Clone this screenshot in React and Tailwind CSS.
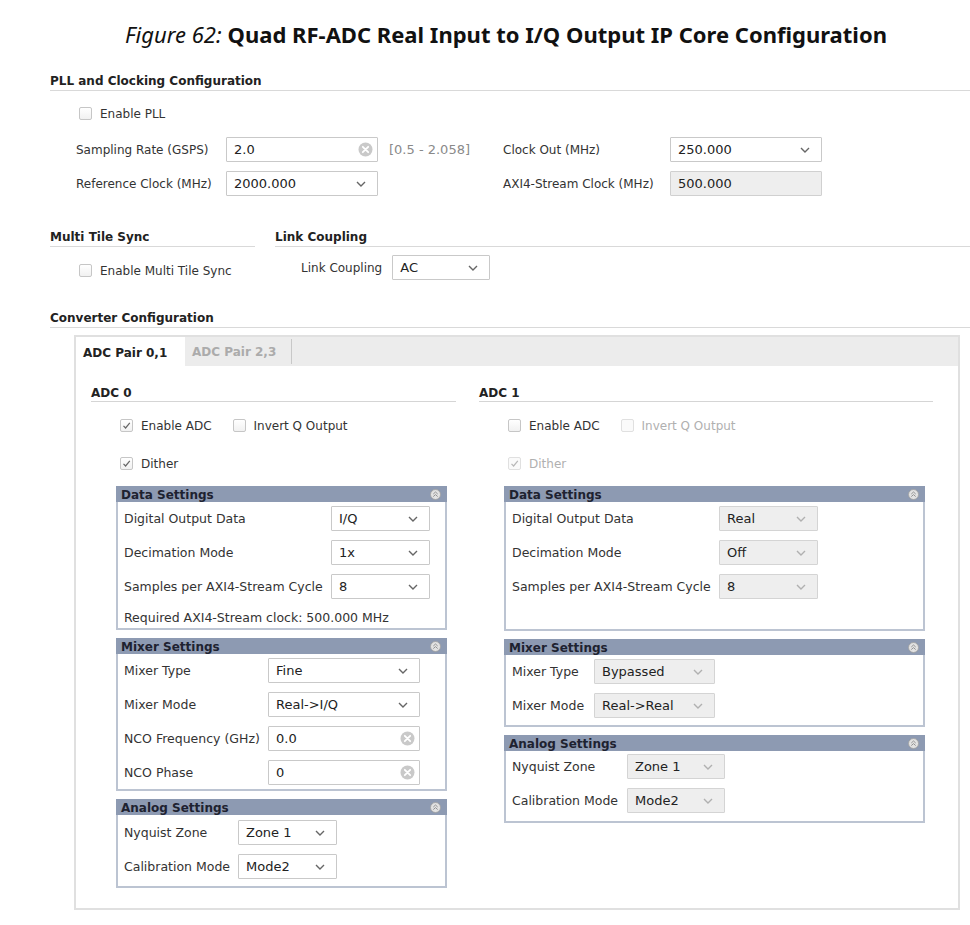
import React from 'react';

const Chevron = ({ light }) => (
  <svg width="10" height="6" viewBox="0 0 10 6" className="shrink-0">
    <path d="M1 1l4 4 4-4" fill="none" stroke={light ? '#b0b0b0' : '#666'} strokeWidth="1.4" />
  </svg>
);

const ClearIcon = () => (
  <svg width="15" height="15" viewBox="0 0 15 15" className="shrink-0">
    <circle cx="7.5" cy="7.5" r="7" fill="#c9c9c9" />
    <path d="M4.8 4.8l5.4 5.4M10.2 4.8l-5.4 5.4" stroke="#fff" strokeWidth="1.8" strokeLinecap="round" />
  </svg>
);

const CollapseIcon = () => (
  <svg width="11" height="11" viewBox="0 0 11 11" className="shrink-0">
    <circle cx="5.5" cy="5.5" r="5" fill="#e2e2e2" stroke="#a0a0a0" strokeWidth="0.8" />
    <path d="M3.3 5l2.2-2 2.2 2M3.3 7.6l2.2-2 2.2 2" fill="none" stroke="#8a8a8a" strokeWidth="0.9" />
  </svg>
);

function Checkbox({ checked, disabled, label }) {
  return (
    <div className="flex items-center h-[13px]">
      <div
        className={`w-[13px] h-[13px] rounded-[2px] border flex items-center justify-center ${
          disabled ? 'border-[#e0e0e0] bg-[#fafafa]' : 'border-[#c6c6c6] bg-gradient-to-b from-white to-[#f1f1f1]'
        }`}
      >
        {checked && (
          <svg width="11" height="11" viewBox="0 0 11 11">
            <path d="M2.5 5.8l2.1 2.2L8.8 2.8" fill="none" stroke={disabled ? '#b8b8b8' : '#666'} strokeWidth="1.2" />
          </svg>
        )}
      </div>
      <span className={`ml-[8px] text-[12px] ${disabled ? 'text-[#b0b0b0]' : 'text-[#333]'}`}>{label}</span>
    </div>
  );
}

function Select({ value, width, disabled }) {
  return (
    <div
      className={`${width} h-[25px] shrink-0 flex items-center justify-between pl-[7px] pr-[11px] border rounded-[1px] ${
        disabled ? 'bg-[#eeeeee] border-[#d4d4d4]' : 'bg-white border-[#c9c9c9]'
      }`}
    >
      <span className="text-[13px] text-[#222] pt-[1px]">{value}</span>
      <Chevron light={disabled} />
    </div>
  );
}

function TextInput({ value, width, disabled, clear }) {
  return (
    <div
      className={`${width} h-[25px] shrink-0 flex items-center justify-between pl-[7px] pr-[4px] border rounded-[1px] ${
        disabled ? 'bg-[#eeeeee] border-[#d0d0d0]' : 'bg-white border-[#c9c9c9]'
      }`}
    >
      <span className="text-[13px] text-[#222] pt-[1px]">{value}</span>
      {clear && <ClearIcon />}
    </div>
  );
}

function Row({ label, labelWidth, children }) {
  return (
    <div className="flex items-center h-[25px]">
      <span className={`${labelWidth} shrink-0 text-[12.5px] text-[#333] whitespace-nowrap pt-[2px]`}>{label}</span>
      {children}
    </div>
  );
}

function Panel({ title, className = '', bodyClass, children }) {
  return (
    <div className={className}>
      <div className="h-[16px] bg-[#8d9ab2] flex items-center justify-between pl-[5px] pr-[6px]">
        <span className="text-[12px] font-bold text-[#1e2230] leading-none pt-[2px]">{title}</span>
        <CollapseIcon />
      </div>
      <div className={`border-x-2 border-b-2 border-[#bcc4d2] bg-white flex flex-col gap-[9px] pl-[6px] ${bodyClass}`}>
        {children}
      </div>
    </div>
  );
}

function Heading({ children, className = '' }) {
  return (
    <div className={`h-[20px] border-b border-[#d9d9d9] text-[12px] font-bold text-[#222] leading-[19px] pt-[1px] ${className}`}>
      {children}
    </div>
  );
}

function Adc0() {
  return (
    <div className="w-[365px]">
      <div className="h-[20px] border-b border-[#d5d5d5] text-[12px] font-bold text-[#222] leading-[18px] pt-[2px]">ADC 0</div>
      <div className="mt-[17px] pl-[29px] flex gap-[21px]">
        <Checkbox checked label="Enable ADC" />
        <Checkbox label="Invert Q Output" />
      </div>
      <div className="mt-[25px] pl-[29px]">
        <Checkbox checked label="Dither" />
      </div>
      <div className="mt-[16px] ml-[25px] w-[331px] flex flex-col gap-[8px]">
        <Panel title="Data Settings" bodyClass="pt-[4px] pb-[4px]">
          <Row label="Digital Output Data" labelWidth="w-[207px]">
            <Select value="I/Q" width="w-[99px]" />
          </Row>
          <Row label="Decimation Mode" labelWidth="w-[207px]">
            <Select value="1x" width="w-[99px]" />
          </Row>
          <Row label="Samples per AXI4-Stream Cycle" labelWidth="w-[207px]">
            <Select value="8" width="w-[99px]" />
          </Row>
          <div className="h-[16px] leading-[16px] pt-[2px] text-[12.5px] text-[#333]">Required AXI4-Stream clock: 500.000 MHz</div>
        </Panel>
        <Panel title="Mixer Settings" bodyClass="pt-[4px] pb-[4px]">
          <Row label="Mixer Type" labelWidth="w-[144px]">
            <Select value="Fine" width="w-[152px]" />
          </Row>
          <Row label="Mixer Mode" labelWidth="w-[144px]">
            <Select value="Real->I/Q" width="w-[152px]" />
          </Row>
          <Row label="NCO Frequency (GHz)" labelWidth="w-[144px]">
            <TextInput value="0.0" width="w-[152px]" clear />
          </Row>
          <Row label="NCO Phase" labelWidth="w-[144px]">
            <TextInput value="0" width="w-[152px]" clear />
          </Row>
        </Panel>
        <Panel title="Analog Settings" bodyClass="pt-[5px] pb-[7px]">
          <Row label="Nyquist Zone" labelWidth="w-[114px]">
            <Select value="Zone 1" width="w-[99px]" />
          </Row>
          <Row label="Calibration Mode" labelWidth="w-[114px]">
            <Select value="Mode2" width="w-[99px]" />
          </Row>
        </Panel>
      </div>
    </div>
  );
}

function Adc1() {
  return (
    <div className="w-[454px]">
      <div className="h-[20px] border-b border-[#d5d5d5] text-[12px] font-bold text-[#222] leading-[18px] pt-[2px]">ADC 1</div>
      <div className="mt-[17px] pl-[29px] flex gap-[21px]">
        <Checkbox label="Enable ADC" />
        <Checkbox disabled label="Invert Q Output" />
      </div>
      <div className="mt-[25px] pl-[29px]">
        <Checkbox checked disabled label="Dither" />
      </div>
      <div className="mt-[16px] ml-[25px] w-[421px] flex flex-col gap-[8px]">
        <Panel title="Data Settings" bodyClass="pt-[4px] pb-[5px]">
          <Row label="Digital Output Data" labelWidth="w-[207px]">
            <Select value="Real" width="w-[99px]" disabled />
          </Row>
          <Row label="Decimation Mode" labelWidth="w-[207px]">
            <Select value="Off" width="w-[99px]" disabled />
          </Row>
          <Row label="Samples per AXI4-Stream Cycle" labelWidth="w-[207px]">
            <Select value="8" width="w-[99px]" disabled />
          </Row>
          <div className="h-[16px]" />
        </Panel>
        <Panel title="Mixer Settings" bodyClass="pt-[4px] pb-[7px]">
          <Row label="Mixer Type" labelWidth="w-[82px]">
            <Select value="Bypassed" width="w-[121px]" disabled />
          </Row>
          <Row label="Mixer Mode" labelWidth="w-[82px]">
            <Select value="Real->Real" width="w-[121px]" disabled />
          </Row>
        </Panel>
        <Panel title="Analog Settings" bodyClass="pt-[3px] pb-[8px]">
          <Row label="Nyquist Zone" labelWidth="w-[115px]">
            <Select value="Zone 1" width="w-[98px]" disabled />
          </Row>
          <Row label="Calibration Mode" labelWidth="w-[115px]">
            <Select value="Mode2" width="w-[98px]" disabled />
          </Row>
        </Panel>
      </div>
    </div>
  );
}

export default function App() {
  return (
    <div className="w-[970px] h-[925px] bg-white font-['DejaVu_Sans',sans-serif] text-[#333] overflow-hidden">
      {/* Figure caption */}
      <div className="h-[71px] flex items-center justify-center pl-[42px] pb-[2px] font-['Noto_Sans',sans-serif] text-[22px] text-[#111]">
        <span className="italic">Figure 62:</span>
        <span className="font-bold ml-[6px]">Quad RF-ADC Real Input to I/Q Output IP Core Configuration</span>
      </div>

      <div className="pl-[50px]">
        {/* PLL and Clocking */}
        <Heading>PLL and Clocking Configuration</Heading>
        <div className="mt-[16px] pl-[29px]">
          <Checkbox label="Enable PLL" />
        </div>
        <div className="mt-[17px] pl-[26px] grid grid-cols-[150px_152px_125px_167px_152px] gap-y-[9px] items-center">
          <span className="text-[12px] pt-[1px]">Sampling Rate (GSPS)</span>
          <TextInput value="2.0" width="w-[152px]" clear />
          <span className="pl-[11px] pt-[1px] text-[13px] text-[#8a8a8a]">[0.5 - 2.058]</span>
          <span className="text-[12px] pt-[1px]">Clock Out (MHz)</span>
          <Select value="250.000" width="w-[152px]" />

          <span className="text-[12px] pt-[1px]">Reference Clock (MHz)</span>
          <Select value="2000.000" width="w-[152px]" />
          <span />
          <span className="text-[12px] pt-[1px]">AXI4-Stream Clock (MHz)</span>
          <TextInput value="500.000" width="w-[152px]" disabled />
        </div>

        {/* Multi Tile Sync / Link Coupling */}
        <div className="mt-[31px] flex">
          <div className="w-[205px]">
            <Heading>Multi Tile Sync</Heading>
            <div className="mt-[17px] pl-[29px]">
              <Checkbox label="Enable Multi Tile Sync" />
            </div>
          </div>
          <div className="flex-1 ml-[20px]">
            <Heading>Link Coupling</Heading>
            <div className="mt-[8px] pl-[26px] flex items-center gap-[10px]">
              <span className="text-[12px] pt-[1px]">Link Coupling</span>
              <Select value="AC" width="w-[98px]" />
            </div>
          </div>
        </div>

        {/* Converter Configuration */}
        <Heading className="mt-[28px]">Converter Configuration</Heading>
        <div className="mt-[7px] ml-[24px] w-[886px] border-2 border-[#e0e0e0]">
          <div className="h-[29px] bg-[#ececec] flex">
            <div className="w-[109px] bg-white flex items-center pl-[7px] pt-[3px] text-[12px] font-bold text-[#222]">ADC Pair 0,1</div>
            <div className="w-[107px] h-[25px] border-r border-[#c8c8c8] flex items-center pl-[7px] mt-[2px] pt-[1px] text-[12px] font-bold text-[#ababab]">
              ADC Pair 2,3
            </div>
          </div>
          <div className="pl-[15px] pt-[16px] pb-[20px] flex gap-[23px]">
            <Adc0 />
            <Adc1 />
          </div>
        </div>
      </div>
    </div>
  );
}
